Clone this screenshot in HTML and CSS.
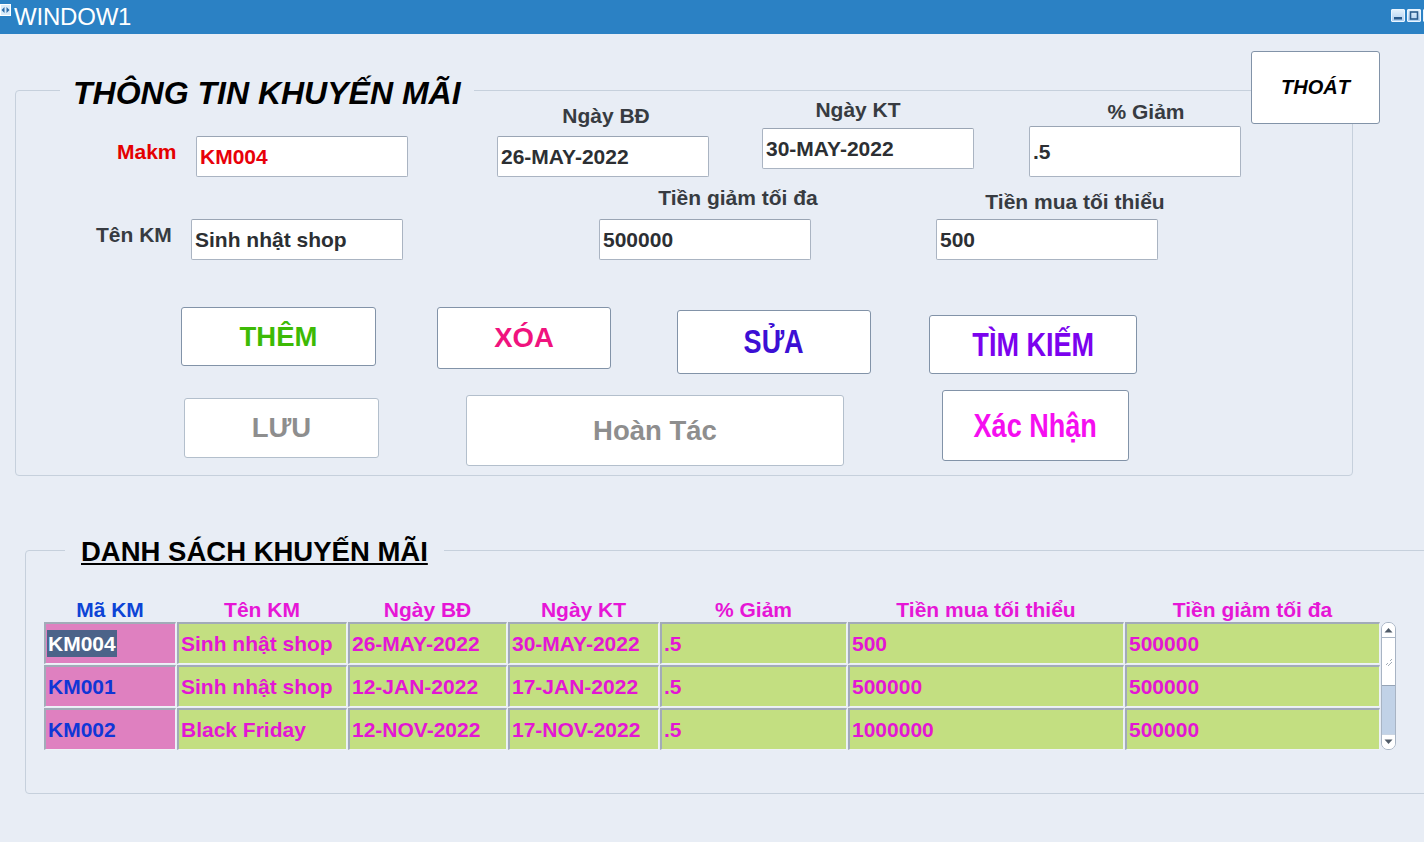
FILE: index.html
```html
<!DOCTYPE html>
<html lang="vi">
<head>
<meta charset="utf-8">
<title>WINDOW1</title>
<link rel="stylesheet" href="styles.css">
</head>
<body>
<div class="window">
  <header class="titlebar">
    <svg class="app-icon" width="11" height="12" viewBox="0 0 11 12">
      <rect x="0.5" y="0.5" width="10" height="11" fill="#d9ebfa" stroke="#ffffff"/>
      <path d="M1.5 6 L4.5 3 L4.5 9 Z" fill="#2b6aa8"/>
      <path d="M9.5 6 L6.5 3 L6.5 9 Z" fill="#2b6aa8"/>
    </svg>
    <span class="title">WINDOW1</span>
    <div class="win-controls">
      <span class="win-btn">
        <svg width="14" height="13" viewBox="0 0 14 13"><rect x="3" y="8" width="8" height="2.5" fill="#2a5b8c"/></svg>
      </span>
      <span class="win-btn">
        <svg width="14" height="13" viewBox="0 0 14 13"><rect x="3.5" y="3" width="7" height="7" fill="none" stroke="#2a5b8c" stroke-width="1.6"/></svg>
      </span>
      <span class="win-btn">
        <svg width="14" height="13" viewBox="0 0 14 13"><path d="M4 3 L10 9 M10 3 L4 9" stroke="#2a5b8c" stroke-width="1.6"/></svg>
      </span>
    </div>
  </header>

  <main class="canvas">
    <button class="btn btn-exit">THOÁT</button>

    <section class="frame frame-info">
      <h2 class="frame-title title-info">THÔNG TIN KHUYẾN MÃI</h2>

      <div class="row row-f1">
        <div class="inline-field f-makm">
          <span class="label label-inline label-red label-makm">Makm</span>
          <input class="input input-red" value="KM004" readonly>
        </div>
        <div class="stack-field f-bd">
          <span class="label label-above">Ngày BĐ</span>
          <input class="input" value="26-MAY-2022" readonly>
        </div>
        <div class="stack-field f-kt">
          <span class="label label-above">Ngày KT</span>
          <input class="input" value="30-MAY-2022" readonly>
        </div>
        <div class="stack-field f-giam">
          <span class="label label-above">% Giảm</span>
          <input class="input input-tall" value=".5" readonly>
        </div>
      </div>

      <div class="row row-f2">
        <div class="inline-field f-ten">
          <span class="label label-inline label-ten">Tên KM</span>
          <input class="input" value="Sinh nhật shop" readonly>
        </div>
        <div class="stack-field f-max">
          <span class="label label-above">Tiền giảm tối đa</span>
          <input class="input" value="500000" readonly>
        </div>
        <div class="stack-field f-min">
          <span class="label label-above">Tiền mua tối thiểu</span>
          <input class="input input-wide" value="500" readonly>
        </div>
      </div>

      <div class="row row-b1">
        <button class="btn btn-them">THÊM</button>
        <button class="btn btn-xoa">XÓA</button>
        <button class="btn btn-narrow btn-sua"><span class="narrow">SỬA</span></button>
        <button class="btn btn-narrow btn-tim"><span class="narrow">TÌM KIẾM</span></button>
      </div>

      <div class="row row-b2">
        <button class="btn btn-disabled btn-luu">LƯU</button>
        <button class="btn btn-disabled btn-hoan">Hoàn Tác</button>
        <button class="btn btn-narrow btn-xac"><span class="narrow">Xác Nhận</span></button>
      </div>
    </section>

    <section class="frame frame-list">
      <h2 class="frame-title title-list">DANH SÁCH KHUYẾN MÃI</h2>

      <div class="table">
        <div class="th th-blue">Mã KM</div>
        <div class="th">Tên KM</div>
        <div class="th">Ngày BĐ</div>
        <div class="th">Ngày KT</div>
        <div class="th">% Giảm</div>
        <div class="th">Tiền mua tối thiểu</div>
        <div class="th">Tiền giảm tối đa</div>
        <div class="th-spacer"></div>

        <div class="scrollbar">
          <div class="sb-arrow sb-up">
            <svg width="9" height="6" viewBox="0 0 9 6"><path d="M0.5 5.5 L4.5 1 L8.5 5.5 Z" fill="#505b68"/></svg>
          </div>
          <div class="sb-thumb">
            <svg width="8" height="10" viewBox="0 0 8 10"><path d="M1 8 L3 6 M3 9 L7 5 M5 4 L7 2" stroke="#8c98a6" stroke-width="0.8" fill="none"/></svg>
          </div>
          <div class="sb-track"></div>
          <div class="sb-arrow sb-down">
            <svg width="9" height="6" viewBox="0 0 9 6"><path d="M0.5 0.5 L4.5 5 L8.5 0.5 Z" fill="#505b68"/></svg>
          </div>
        </div>

        <div class="td td-key"><span class="selected">KM004</span></div>
        <div class="td">Sinh nhật shop</div>
        <div class="td">26-MAY-2022</div>
        <div class="td">30-MAY-2022</div>
        <div class="td">.5</div>
        <div class="td">500</div>
        <div class="td">500000</div>

        <div class="td td-key">KM001</div>
        <div class="td">Sinh nhật shop</div>
        <div class="td">12-JAN-2022</div>
        <div class="td">17-JAN-2022</div>
        <div class="td">.5</div>
        <div class="td">500000</div>
        <div class="td">500000</div>

        <div class="td td-key">KM002</div>
        <div class="td">Black Friday</div>
        <div class="td">12-NOV-2022</div>
        <div class="td">17-NOV-2022</div>
        <div class="td">.5</div>
        <div class="td">1000000</div>
        <div class="td">500000</div>
      </div>
    </section>
  </main>
</div>
</body>
</html>
```

FILE: styles.css
```css
* { box-sizing: border-box; }

html, body {
  margin: 0;
  padding: 0;
}

body {
  width: 1424px;
  height: 842px;
  overflow: hidden;
  background: #e8edf5;
  font-family: "Liberation Sans", Arial, sans-serif;
}

/* ---------- title bar ---------- */
.titlebar {
  height: 34px;
  background: #2b81c4;
  display: flex;
  align-items: center;
  overflow: hidden;
}

.app-icon {
  flex: none;
  margin: -14px 3px 0 0;
}

.title {
  color: #ffffff;
  font-size: 24px;
  line-height: 34px;
  letter-spacing: -0.2px;
}

.win-controls {
  margin-left: auto;
  margin-right: -13px;
  display: flex;
  gap: 2px;
  align-self: flex-start;
  margin-top: 9px;
}

.win-btn {
  width: 14px;
  height: 13px;
  display: block;
  background: linear-gradient(#e3f1fc, #aecff0);
  border: 1px solid #eaf5ff;
  border-radius: 1px;
  flex: none;
}

.win-btn svg {
  display: block;
  margin: -1px;
}

/* ---------- canvas ---------- */
.canvas {
  position: relative;
  display: flow-root;
  height: 808px;
}

.frame {
  border: 1px solid #c6d0dc;
  border-radius: 4px;
}

.frame-title {
  margin: 0;
  width: max-content;
  background: #e8edf5;
  font-weight: bold;
  color: #000000;
  white-space: nowrap;
}

.frame-info {
  margin: 56px 0 0 15px;
  width: 1338px;
  height: 386px;
}

.title-info {
  font-size: 32px;
  line-height: 32px;
  font-style: italic;
  margin: -14px 0 -18px 44px;
  padding: 0 13px;
}

.frame-list {
  margin: 74px 0 0 25px;
  width: 1420px;
  height: 244px;
}

.title-list {
  font-size: 27.5px;
  line-height: 28px;
  margin: -13px 0 -15px 39px;
  padding: 0 16px;
  text-decoration: underline;
  text-decoration-thickness: 2px;
  text-underline-offset: 2px;
}

/* ---------- form rows ---------- */
.row {
  display: flex;
  align-items: flex-start;
}

.row-f1 { height: 95px; }
.row-f2 { height: 114px; }
.row-b1 { height: 85px; }

.label {
  font-size: 21px;
  font-weight: bold;
  line-height: 24px;
  color: #373b41;
  white-space: nowrap;
}

.label-red { color: #e40000; }

.inline-field {
  display: flex;
  align-items: center;
}

.label-inline { margin-bottom: 10px; }
.label-makm { width: 79px; }
.label-ten { width: 95px; }

.stack-field {
  display: flex;
  flex-direction: column;
  align-items: flex-start;
  width: 212px;
}

.label-above {
  width: 190px;
  text-align: center;
}

.input {
  width: 212px;
  height: 41px;
  margin: 0;
  padding: 0 3px;
  background: #ffffff;
  border: 1px solid #aab4c2;
  border-top-color: #9aa5b4;
  border-radius: 2px;
  font-family: "Liberation Sans", Arial, sans-serif;
  font-size: 21px;
  font-weight: bold;
  color: #2c2f33;
  outline: none;
}

.input-red { color: #e8000a; }
.input-tall { height: 51px; }
.input-wide { width: 222px; }

.f-makm { margin: 45px 0 0 101px; }
.f-bd { margin: 13px 0 0 89px; }
.f-bd .label-above { margin: 0 0 8px 14px; }
.f-kt { margin: 7px 0 0 53px; }
.f-kt .label-above { margin: 0 0 6px 1px; }
.f-giam { margin: 9px 0 0 55px; }
.f-giam .label-above { margin: 0 0 2px 22px; }

.f-ten { margin: 33px 0 0 80px; }
.f-max { margin: 0 0 0 196px; }
.f-max .label-above { margin: 0 0 9px 44px; }
.f-min { margin: 4px 0 0 125px; width: 222px; }
.f-min .label-above { margin: 0 0 5px 44px; }

/* ---------- buttons ---------- */
.btn {
  margin: 0;
  padding: 0;
  background: #ffffff;
  border: 1px solid #8293a8;
  border-radius: 3px;
  font-family: "Liberation Sans", Arial, sans-serif;
  font-size: 27.5px;
  font-weight: bold;
  display: flex;
  align-items: center;
  justify-content: center;
  white-space: nowrap;
  flex: none;
}

.btn-narrow {
  font-size: 33px;
}

.narrow {
  display: inline-block;
  transform: scaleX(0.82);
}

.btn-disabled {
  border-color: #b3bfcc;
  color: #8e8e8e;
}

.btn-exit {
  position: absolute;
  left: 1251px;
  top: 17px;
  width: 129px;
  height: 73px;
  font-size: 20px;
  font-style: italic;
  color: #000000;
  z-index: 2;
}

.btn-them { width: 195px; height: 59px; margin: 7px 0 0 165px; color: #3dba05; }
.btn-xoa  { width: 174px; height: 62px; margin: 7px 0 0 61px; color: #f0137e; }
.btn-sua  { width: 194px; height: 64px; margin: 10px 0 0 66px; color: #3c0fd4; }
.btn-tim  { width: 208px; height: 59px; margin: 15px 0 0 58px; color: #7b02ee; }

.btn-luu  { width: 195px; height: 60px; margin: 13px 0 0 168px; }
.btn-hoan { width: 378px; height: 71px; margin: 10px 0 0 87px; }
.btn-xac  { width: 187px; height: 71px; margin: 5px 0 0 98px; color: #f50ef0; }

/* ---------- table ---------- */
.table {
  display: grid;
  grid-template-columns: 132px 170px 159px 151px 187px 276px 255px 15px;
  grid-template-rows: 23px 42px 42px 42px;
  column-gap: 1px;
  row-gap: 1px;
  margin: 47px 0 0 18px;
  width: max-content;
}

.th {
  font-size: 21px;
  font-weight: bold;
  line-height: 23px;
  color: #e616d6;
  text-align: center;
  white-space: nowrap;
}

.th-blue { color: #0d44d6; }

.td {
  background: #c3df81;
  border-top: 2px solid #a2abb8;
  border-left: 2px solid #a2abb8;
  border-right: 1px solid #eef2f7;
  border-bottom: 1px solid #eef2f7;
  padding-left: 2px;
  display: flex;
  align-items: center;
  font-size: 21px;
  font-weight: bold;
  color: #e316d4;
  white-space: nowrap;
  overflow: hidden;
}

.td-key {
  background: #df80c0;
  color: #1036d6;
}

.selected {
  display: inline-block;
  background: #4c6389;
  color: #ffffff;
  line-height: 27px;
  padding: 0 1px;
  margin-left: -1px;
}

/* ---------- scrollbar ---------- */
.scrollbar {
  grid-column: 8;
  grid-row: 2 / span 3;
  display: flex;
  flex-direction: column;
  border: 1px solid #a8b4c4;
  border-radius: 7px;
  background: #ffffff;
  overflow: hidden;
}

.sb-arrow {
  height: 15px;
  display: flex;
  align-items: center;
  justify-content: center;
  background: #ffffff;
  flex: none;
}

.sb-up { border-bottom: 1px solid #a8b4c4; }
.sb-down { border-top: 1px solid #c9d4e2; }

.sb-thumb {
  height: 48px;
  display: flex;
  align-items: center;
  justify-content: center;
  border-bottom: 1px solid #96a4b6;
  flex: none;
}

.sb-track {
  flex: 1;
  background: #c1d2e7;
}
```
